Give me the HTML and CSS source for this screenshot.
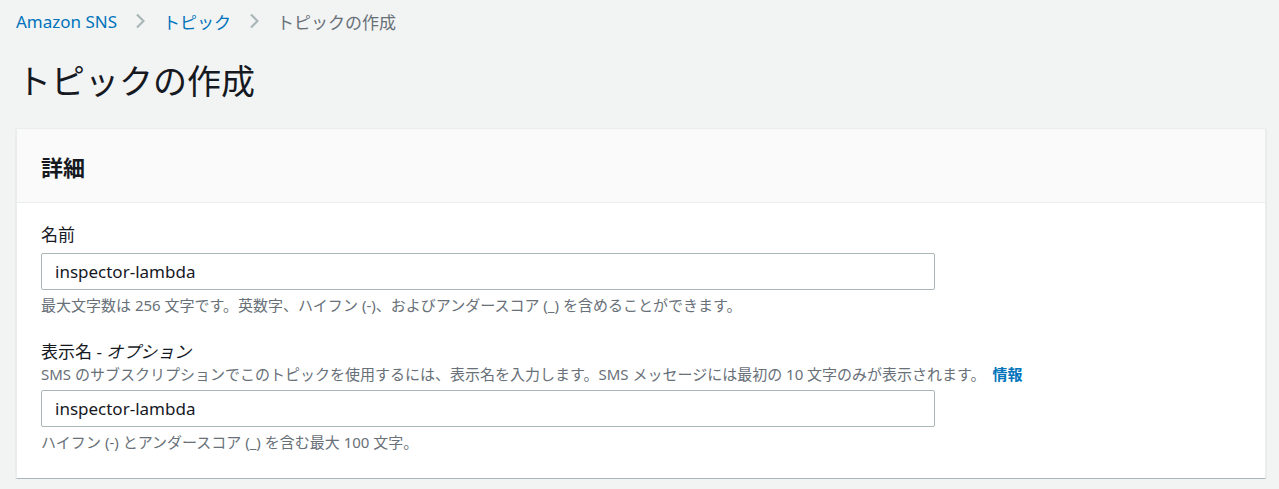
FILE: index.html
```html
<!DOCTYPE html>
<html lang="ja">
<head>
  <meta charset="UTF-8">
  <meta name="viewport" content="width=device-width, initial-scale=1.0">
  <title>トピックの作成</title>
  <link rel="stylesheet" href="styles.css">
</head>
<body>
  <nav class="breadcrumbs">
    <a href="#">Amazon SNS</a>
    <svg class="chevron" viewBox="0 0 10 16" width="10" height="16"><path d="M2 1.5l6.5 6.5L2 14.5" fill="none" stroke="#aab7b8" stroke-width="2.2"/></svg>
    <a href="#">トピック</a>
    <svg class="chevron" viewBox="0 0 10 16" width="10" height="16"><path d="M2 1.5l6.5 6.5L2 14.5" fill="none" stroke="#aab7b8" stroke-width="2.2"/></svg>
    <span class="current">トピックの作成</span>
  </nav>

  <h1 class="page-title">トピックの作成</h1>

  <section class="card">
    <header class="card-header">
      <h2>詳細</h2>
    </header>
    <div class="card-body">
      <div class="field">
        <label for="topic-name" class="field-label">名前</label>
        <input type="text" id="topic-name" value="inspector-lambda">
        <p class="hint">最大文字数は 256 文字です。英数字、ハイフン (-)、およびアンダースコア (_) を含めることができます。</p>
      </div>
      <div class="field">
        <label for="display-name" class="field-label">表示名 - <i>オプション</i></label>
        <p class="description">SMS のサブスクリプションでこのトピックを使用するには、表示名を入力します。SMS メッセージには最初の 10 文字のみが表示されます。 <a href="#" class="info">情報</a></p>
        <input type="text" id="display-name" value="inspector-lambda">
        <p class="hint">ハイフン (-) とアンダースコア (_) を含む最大 100 文字。</p>
      </div>
    </div>
  </section>
</body>
</html>
```

FILE: styles.css
```css
body {
  margin: 0;
  padding: 0 13px 0 16px;
  background-color: #f2f3f3;
  color: #16191f;
  font-family: "Noto Sans", "Noto Sans CJK JP", sans-serif;
}
a {
  color: #0073bb;
  text-decoration: none;
}
.breadcrumbs {
  display: flex;
  align-items: center;
  height: 42px;
  font-size: 17px;
}
.breadcrumbs .chevron {
  margin: 0 18px;
}
.breadcrumbs .current {
  color: #687078;
}
.page-title {
  margin: 0;
  padding: 16px 0 24px 1px;
  font-size: 34px;
  font-weight: 400;
  line-height: 46px;
}
.card {
  background: #fff;
  border: 1px solid #eaeded;
  border-bottom: 1px solid #aab7b8;
  box-shadow: 0 1px 1px rgba(0, 28, 36, 0.2);
}
.card-header {
  background: #fafafa;
  border-bottom: 1px solid #eaeded;
  height: 73px;
  display: flex;
  align-items: center;
  padding: 0 24px;
}
.card-header h2 {
  margin: 0;
  font-size: 22px;
  font-weight: 700;
}
.card-body {
  padding: 18px 24px 24px;
}
.field + .field {
  margin-top: 21px;
}
.field-label {
  display: block;
  font-size: 17px;
  line-height: 28px;
  margin-bottom: 4px;
}
.field-label i {
  font-style: italic;
}
.field input {
  display: block;
  box-sizing: border-box;
  width: 894px;
  height: 37px;
  padding: 0 13px;
  border: 1px solid #aab7b8;
  border-radius: 2px;
  font-family: inherit;
  font-size: 17px;
  color: #16191f;
  background: #fff;
}
.hint, .description {
  margin: 0;
  font-size: 15px;
  color: #687078;
  line-height: 24px;
}
.hint {
  margin-top: 3px;
}
.description {
  margin-top: -8px;
  margin-bottom: 4px;
}
.info {
  font-weight: 700;
  margin-left: 3px;
}
```
